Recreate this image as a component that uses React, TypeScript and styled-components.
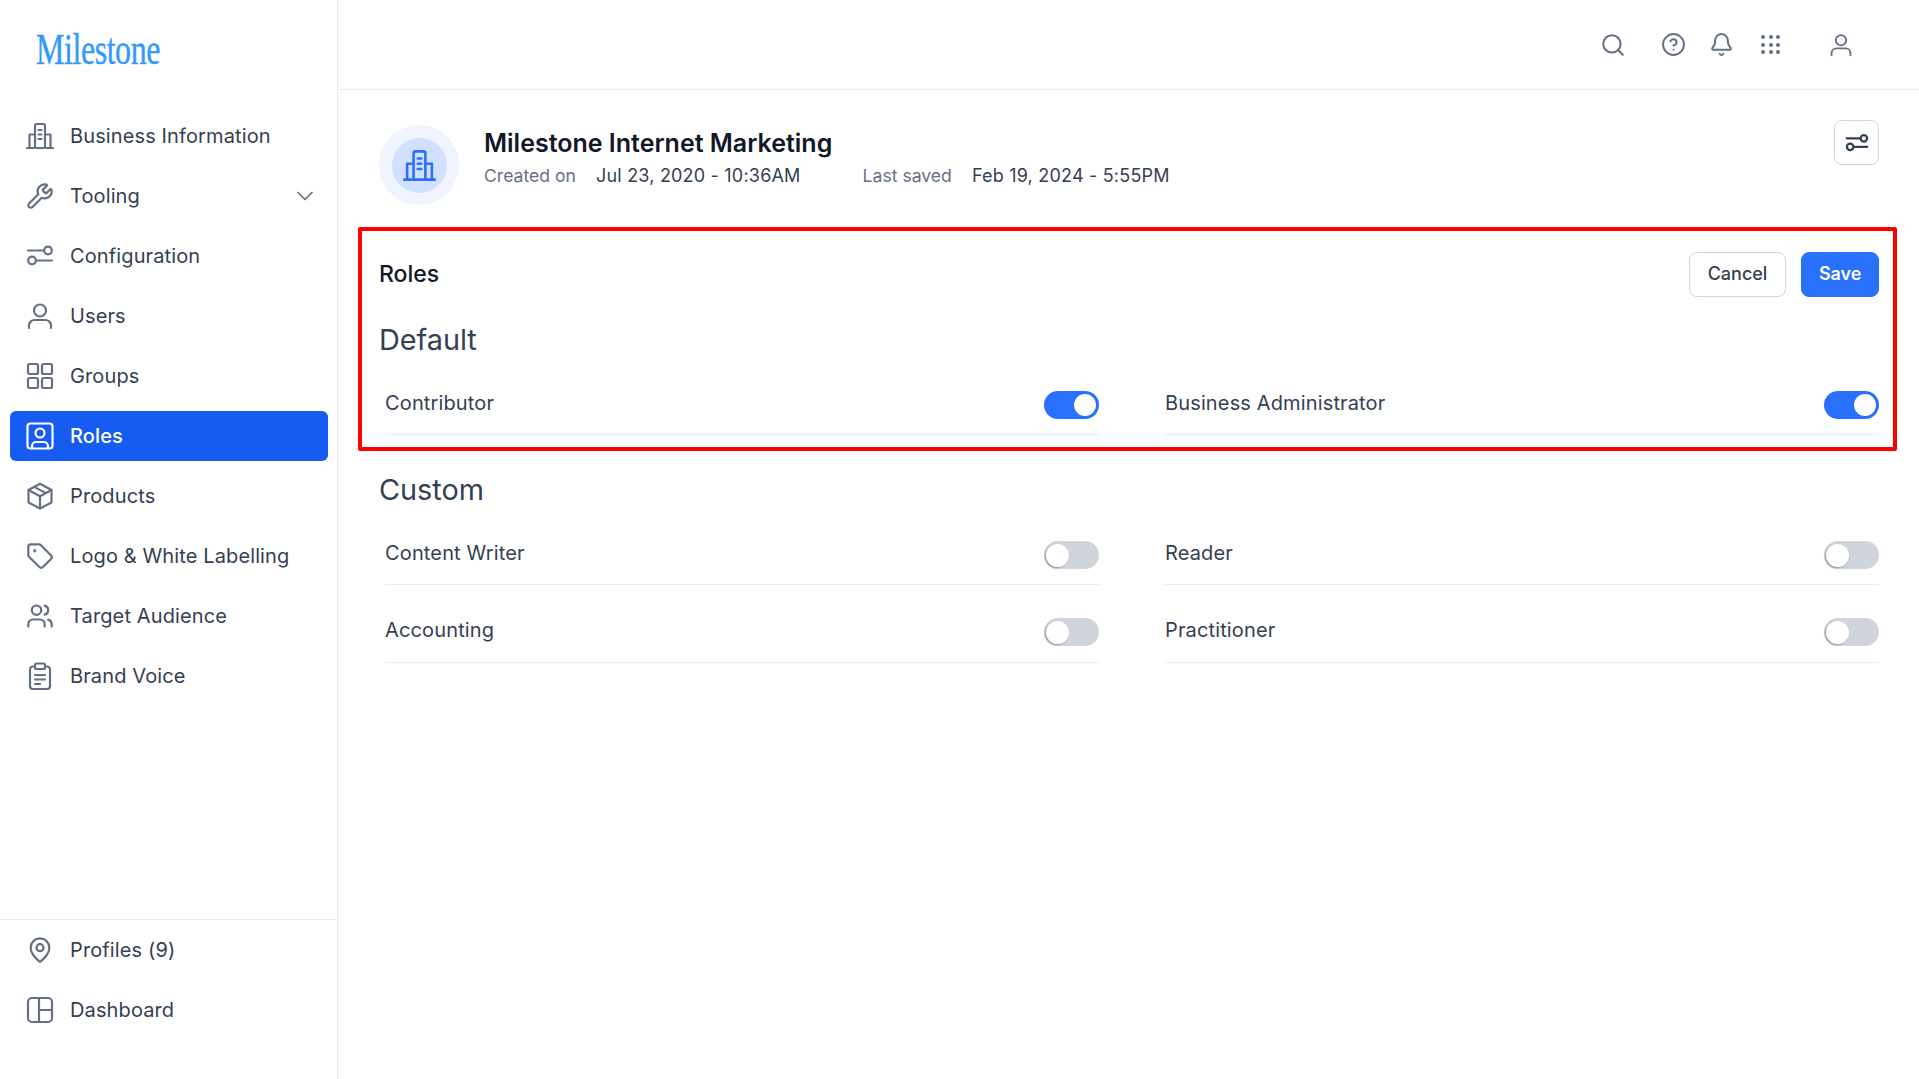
import React from "react";
import styled, { createGlobalStyle } from "styled-components";
import { Search, CircleHelp, Bell, ChevronDown, Wrench, Tag, Users, MapPin } from "lucide-react";

const Global = createGlobalStyle`
  html, body { margin: 0; padding: 0; background: #fff; }
  body { font-family: Inter, "Noto Sans", sans-serif; color: #344054; }
  * { box-sizing: border-box; }
`;

const Page = styled.div`
  display: flex;
  width: 1919px;
  height: 1079px;
  overflow: hidden;
`;

const Sidebar = styled.aside`
  width: 338px;
  flex: none;
  display: flex;
  flex-direction: column;
  border-right: 1px solid #eaecf0;
`;

const LogoWrap = styled.div`
  height: 101px;
  padding: 24px 0 0 36px;
  flex: none;
`;

const LogoText = styled.span`
  display: block;
  width: 125px;
  font-family: "Liberation Serif", serif;
  font-size: 45px;
  line-height: 50px;
  color: #3399ff;
  -webkit-text-stroke: 0.4px #3399ff;
  transform: scaleX(0.71);
  transform-origin: left center;
  letter-spacing: -0.6px;
  white-space: nowrap;
`;

const Nav = styled.nav`
  flex: 1;
  display: flex;
  flex-direction: column;
  gap: 10px;
  padding: 10px 9px 0 10px;
`;

const BottomNav = styled.nav`
  display: flex;
  flex-direction: column;
  gap: 10px;
  padding: 5px 9px 44px 10px;
  border-top: 1px solid #eaecf0;
`;

const NavItem = styled.div<{ $active?: boolean }>`
  height: 50px;
  display: flex;
  align-items: center;
  gap: 16px;
  padding: 0 9px 0 16px;
  border-radius: 6px;
  font-size: 20px;
  letter-spacing: 0.12px;
  background: ${(p) => (p.$active ? "#175cf0" : "transparent")};
  color: ${(p) => (p.$active ? "#ffffff" : "#344054")};
  font-weight: ${(p) => (p.$active ? 500 : 400)};
`;

const NavIcon = styled.span<{ $active?: boolean }>`
  width: 28px;
  height: 28px;
  flex: none;
  display: flex;
  color: ${(p) => (p.$active ? "#ffffff" : "#667085")};
`;

const NavLabel = styled.span`
  flex: 1;
`;

const Chevron = styled(ChevronDown)`
  color: #667085;
  flex: none;
`;

const Main = styled.main`
  flex: 1;
  min-width: 0;
  display: flex;
  flex-direction: column;
`;

const TopBar = styled.header`
  height: 90px;
  flex: none;
  border-bottom: 1px solid #eaecf0;
  display: flex;
  align-items: center;
  padding: 0 66px 0 0;
  justify-content: flex-end;
  color: #667085;
`;

const TopIcon = styled.span<{ $gap: number }>`
  display: flex;
  margin-left: ${(p) => p.$gap}px;
`;

const Content = styled.div`
  padding: 35px 22px 0 20px;
  display: flex;
  flex-direction: column;
`;

const Header = styled.div`
  display: flex;
  align-items: flex-start;
  margin-left: 21px;
  margin-right: 18px;
`;

const HaloOuter = styled.div`
  width: 80px;
  height: 80px;
  border-radius: 50%;
  background: #eff4ff;
  display: flex;
  align-items: center;
  justify-content: center;
  flex: none;
`;

const HaloInner = styled.div`
  width: 55px;
  height: 55px;
  border-radius: 50%;
  background: #d1e0ff;
  display: flex;
  align-items: center;
  justify-content: center;
  color: #2970ff;
`;

const HeaderText = styled.div`
  flex: 1;
  margin-left: 25px;
`;

const Title = styled.h1`
  margin: 0;
  padding-top: 2px;
  font-size: 25px;
  line-height: 32px;
  font-weight: 600;
  color: #101828;
`;

const Meta = styled.div`
  display: flex;
  align-items: baseline;
  line-height: 26px;
  margin-top: 4px;
`;

const MetaKey = styled.span`
  font-size: 17.6px;
  color: #667085;
  margin-right: 20px;
`;

const MetaValue = styled.span<{ $gap?: number }>`
  font-size: 18px;
  letter-spacing: 0.2px;
  color: #344054;
  margin-right: ${(p) => p.$gap ?? 0}px;
`;

const IconButton = styled.button`
  width: 45px;
  height: 45px;
  margin: -5px 0 0;
  padding: 0;
  display: flex;
  align-items: center;
  justify-content: center;
  border: 1px solid #d0d5dd;
  border-radius: 8px;
  background: #fff;
  color: #344054;
`;

const Highlight = styled.section`
  margin-top: 22px;
  border: 4px solid #ff0000;
  border-radius: 2px;
  padding: 20px 14px 0 17px;
  height: 224px;
`;

const SectionHead = styled.div`
  display: flex;
  align-items: center;
  justify-content: space-between;
  height: 46px;
`;

const SectionTitle = styled.h2`
  margin: 0;
  font-size: 23px;
  font-weight: 500;
  color: #101828;
`;

const Actions = styled.div`
  display: flex;
  gap: 15px;
`;

const Button = styled.button<{ $primary?: boolean }>`
  height: 45px;
  padding: 0 ${(p) => (p.$primary ? 16.5 : 18)}px 1px;
  border-radius: 8px;
  font-family: Inter, sans-serif;
  font-size: 18px;
  font-weight: ${(p) => (p.$primary ? 600 : 500)};
  border: 1px solid ${(p) => (p.$primary ? "#2970ff" : "#d0d5dd")};
  background: ${(p) => (p.$primary ? "#2970ff" : "#fff")};
  color: ${(p) => (p.$primary ? "#fff" : "#344054")};
`;

const GroupTitle = styled.h3<{ $top: number }>`
  margin: ${(p) => p.$top}px 0 0;
  font-size: 28.8px;
  line-height: 40px;
  font-weight: 400;
  color: #344054;
`;

const CustomBlock = styled.section`
  padding: 19px 17px 0 21px;
`;

const Grid = styled.div`
  display: grid;
  grid-template-columns: 714px 714px;
  column-gap: 66px;
  margin-left: 6px;
`;

const Row = styled.div<{ $height: number; $pad: number }>`
  height: ${(p) => p.$height}px;
  padding-top: ${(p) => p.$pad}px;
  display: flex;
  align-items: flex-start;
  justify-content: space-between;
  border-bottom: 1px solid #eaecf0;
  font-size: 20px;
  letter-spacing: 0.14px;
  line-height: 28px;
  color: #344054;
`;

const Toggle = styled.span<{ $on?: boolean }>`
  width: 55px;
  height: 28px;
  margin-top: 2px;
  flex: none;
  padding: ${(p) => (p.$on ? 3 : 2.5)}px ${(p) => (p.$on ? 3 : 2)}px;
  border-radius: 14px;
  display: flex;
  justify-content: ${(p) => (p.$on ? "flex-end" : "flex-start")};
  background: ${(p) => (p.$on ? "#2970ff" : "#d0d5dd")};
`;

const Knob = styled.span<{ $on?: boolean }>`
  width: ${(p) => (p.$on ? 22 : 23)}px;
  height: ${(p) => (p.$on ? 22 : 23)}px;
  border-radius: 50%;
  background: #fff;
  box-shadow: ${(p) => (p.$on ? "none" : "-1px 1px 2px rgba(16, 24, 40, 0.35)")};
`;

const S = { fill: "none", stroke: "currentColor", strokeWidth: 2.2, strokeLinecap: "round", strokeLinejoin: "round" } as const;

const Building = ({ size = 28 }: { size?: number }) => (
  <svg width={size} height={size} viewBox="0 0 28 28" {...S}>
    <path d="M1 26h26" />
    <path d="M3.500 26V12.500h5.500M24.500 26V12.500H19" />
    <path d="M9 26V3.500a1.500 1.500 0 0 1 1.500-1.500h7a1.500 1.500 0 0 1 1.500 1.500V26" />
    <path d="M12.500 8h3M12.500 12.500h3M12.500 17h3" />
  </svg>
);

const Sliders = ({ size = 28, sw = 2.2 }: { size?: number; sw?: number }) => (
  <svg width={size} height={size} viewBox="0 0 28 28" {...S} strokeWidth={sw}>
    <path d="M2 8.500h16M11 18.500h15" />
    <circle cx="22" cy="8.500" r="3.800" />
    <circle cx="6" cy="18.500" r="3.800" />
  </svg>
);

const Person = ({ size = 28 }: { size?: number }) => (
  <svg width={size} height={size} viewBox="0 0 28 28" {...S}>
    <circle cx="14" cy="8.500" r="6" />
    <path d="M3 26v-2.500a5.500 5.500 0 0 1 5.500-5.500h11a5.500 5.500 0 0 1 5.500 5.500V26" />
  </svg>
);

const Squares = () => (
  <svg width={28} height={28} viewBox="0 0 28 28" {...S}>
    <rect x="2" y="2" width="10" height="10" rx="1.500" />
    <rect x="16" y="2" width="10" height="10" rx="1.500" />
    <rect x="2" y="16" width="10" height="10" rx="1.500" />
    <rect x="16" y="16" width="10" height="10" rx="1.500" />
  </svg>
);

const RoleIcon = () => (
  <svg width={28} height={28} viewBox="0 0 28 28" {...S}>
    <rect x="1.500" y="1.500" width="25" height="25" rx="3" />
    <circle cx="14" cy="11" r="4.500" />
    <path d="M6 26v-2a4 4 0 0 1 4-4h8a4 4 0 0 1 4 4v2" />
  </svg>
);

const Cube = () => (
  <svg width={28} height={28} viewBox="0 0 28 28" {...S}>
    <path d="M14 1.800 25.500 8v12.500L14 26.500 2.500 20.500V8Z" />
    <path d="M2.500 8 14 14.200 25.500 8M14 14.200v12.300M8.200 4.900l11.600 6.200" />
  </svg>
);

const Clipboard = () => (
  <svg width={28} height={28} viewBox="0 0 28 28" {...S}>
    <path d="M9 4.500H7a3 3 0 0 0-3 3V24a3 3 0 0 0 3 3h14a3 3 0 0 0 3-3V7.500a3 3 0 0 0-3-3h-2" />
    <rect x="9" y="1.500" width="10" height="5.500" rx="1.500" />
    <path d="M9 13h10M9 17.500h10M9 22h5" />
  </svg>
);

const Layout = () => (
  <svg width={28} height={28} viewBox="0 0 28 28" {...S}>
    <rect x="2" y="2" width="24" height="24" rx="4" />
    <path d="M13 2v24M13 14h13" />
  </svg>
);

const Dots = () => (
  <svg width={22} height={22} viewBox="0 0 22 22" fill="currentColor">
    {[3, 11, 18].flatMap((y) =>
      [3, 11, 18].map((x) => <circle key={`${x}-${y}`} cx={x} cy={y} r="2" />)
    )}
  </svg>
);

const icon = (I: typeof Wrench) => <I size={28} strokeWidth={1.9} />;

const items: { label: string; node: React.ReactNode; chevron?: boolean; active?: boolean }[] = [
  { label: "Business Information", node: <Building /> },
  { label: "Tooling", node: icon(Wrench), chevron: true },
  { label: "Configuration", node: <Sliders /> },
  { label: "Users", node: <Person /> },
  { label: "Groups", node: <Squares /> },
  { label: "Roles", node: <RoleIcon />, active: true },
  { label: "Products", node: <Cube /> },
  { label: "Logo & White Labelling", node: icon(Tag) },
  { label: "Target Audience", node: icon(Users) },
  { label: "Brand Voice", node: <Clipboard /> },
];

const bottomItems = [
  { label: "Profiles (9)", node: icon(MapPin) },
  { label: "Dashboard", node: <Layout /> },
];

const custom = ["Content Writer", "Reader", "Accounting", "Practitioner"];

export default function App() {
  return (
    <Page>
      <Global />
      <Sidebar>
        <LogoWrap>
          <LogoText>Milestone</LogoText>
        </LogoWrap>
        <Nav>
          {items.map((it) => (
            <NavItem key={it.label} $active={it.active}>
              <NavIcon $active={it.active}>{it.node}</NavIcon>
              <NavLabel>{it.label}</NavLabel>
              {it.chevron && <Chevron size={28} strokeWidth={1.5} />}
            </NavItem>
          ))}
        </Nav>
        <BottomNav>
          {bottomItems.map((it) => (
            <NavItem key={it.label}>
              <NavIcon>{it.node}</NavIcon>
              <NavLabel>{it.label}</NavLabel>
            </NavItem>
          ))}
        </BottomNav>
      </Sidebar>
      <Main>
        <TopBar>
          <TopIcon $gap={0}><Search size={26} strokeWidth={1.9} /></TopIcon>
          <TopIcon $gap={35}><CircleHelp size={25} strokeWidth={1.9} /></TopIcon>
          <TopIcon $gap={23}><Bell size={25} strokeWidth={1.9} /></TopIcon>
          <TopIcon $gap={26}><Dots /></TopIcon>
          <TopIcon $gap={47}><Person size={24} /></TopIcon>
        </TopBar>
        <Content>
          <Header>
            <HaloOuter>
              <HaloInner>
                <Building size={33} />
              </HaloInner>
            </HaloOuter>
            <HeaderText>
              <Title>Milestone Internet Marketing</Title>
              <Meta>
                <MetaKey>Created on</MetaKey>
                <MetaValue $gap={62}>Jul 23, 2020 - 10:36AM</MetaValue>
                <MetaKey>Last saved</MetaKey>
                <MetaValue>Feb 19, 2024 - 5:55PM</MetaValue>
              </Meta>
            </HeaderText>
            <IconButton aria-label="settings">
              <Sliders size={24} sw={2.6} />
            </IconButton>
          </Header>
          <Highlight>
            <SectionHead>
              <SectionTitle>Roles</SectionTitle>
              <Actions>
                <Button>Cancel</Button>
                <Button $primary>Save</Button>
              </Actions>
            </SectionHead>
            <GroupTitle $top={23}>Default</GroupTitle>
            <Grid>
              <Row $height={75} $pad={29}>
                Contributor
                <Toggle $on><Knob $on /></Toggle>
              </Row>
              <Row $height={75} $pad={29}>
                Business Administrator
                <Toggle $on><Knob $on /></Toggle>
              </Row>
            </Grid>
          </Highlight>
          <CustomBlock>
            <GroupTitle $top={0}>Custom</GroupTitle>
            <Grid>
              {custom.map((label, i) => (
                <Row key={label} $height={i < 2 ? 75 : 78} $pad={i < 2 ? 29 : 31}>
                  {label}
                  <Toggle><Knob /></Toggle>
                </Row>
              ))}
            </Grid>
          </CustomBlock>
        </Content>
      </Main>
    </Page>
  );
}
